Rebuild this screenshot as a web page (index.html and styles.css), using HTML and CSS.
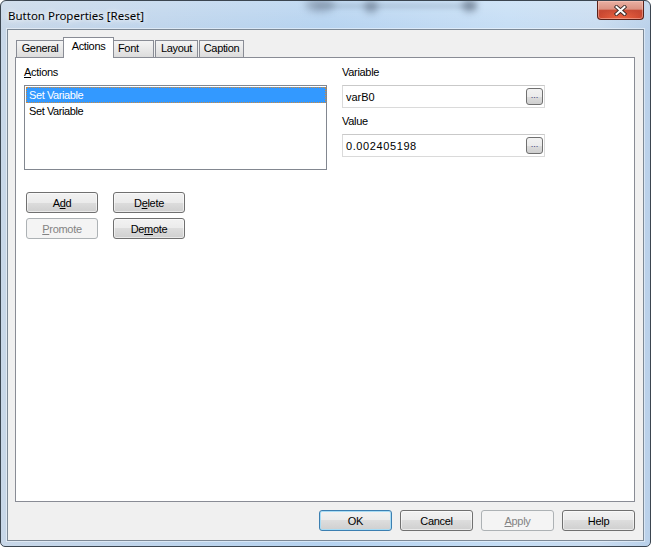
FILE: index.html
```html
<!DOCTYPE html>
<html>
<head>
<meta charset="utf-8">
<title>Button Properties [Reset]</title>
<link rel="stylesheet" href="styles.css">
</head>
<body>
<div class="window">
  <div class="titlebar">
    <div class="glass-deco">
      <span class="blob blob0"></span>
      <span class="band"></span>
      <span class="blob blob1"></span>
      <span class="blob blob2"></span>
    </div>
    <span class="title">Button Properties [Reset]</span>
    <div class="close">
      <svg width="13" height="11" viewBox="0 0 13 11">
        <path d="M2.5 2 L10.5 9 M10.5 2 L2.5 9" stroke="#3a2a28" stroke-width="3.8" stroke-linecap="square" fill="none"/>
        <path d="M2.5 2 L10.5 9 M10.5 2 L2.5 9" stroke="#ffffff" stroke-width="2" stroke-linecap="square" fill="none"/>
      </svg>
    </div>
  </div>
  <div class="client">
    <div class="tabs">
      <div class="tab tab-general">General</div>
      <div class="tab tab-active">Actions</div>
      <div class="tab tab-font">Font</div>
      <div class="tab tab-layout">Layout</div>
      <div class="tab tab-caption">Caption</div>
    </div>
    <div class="panel">
      <div class="cols">
        <div class="left">
          <div class="label"><u>A</u>ctions</div>
          <div class="listbox">
            <div class="item sel">Set Variable</div>
            <div class="item">Set Variable</div>
          </div>
        </div>
        <div class="right">
          <div class="label">Variable</div>
          <div class="field"><span class="val">varB0</span><span class="dots">...</span></div>
          <div class="label label-gap">Value</div>
          <div class="field"><span class="val num">0.002405198</span><span class="dots">...</span></div>
        </div>
      </div>
      <div class="btngrid">
        <div class="btn">A<u>d</u>d</div>
        <div class="btn">D<u>e</u>lete</div>
        <div class="btn disabled"><u>P</u>romote</div>
        <div class="btn">De<u>m</u>ote</div>
      </div>
    </div>
    <div class="footer">
      <div class="btn default">OK</div>
      <div class="btn">Cancel</div>
      <div class="btn disabled"><u>A</u>pply</div>
      <div class="btn">Help</div>
    </div>
  </div>
</div>
</body>
</html>
```

FILE: styles.css
```css
* { box-sizing: border-box; }
html, body { margin: 0; padding: 0; background: #ffffff; }
body {
  width: 651px;
  height: 547px;
  overflow: hidden;
  font-family: "Liberation Sans", Arial, sans-serif;
  font-size: 11px;
  color: #000;
}

.window {
  width: 651px;
  height: 547px;
  border: 1px solid #3b4550;
  border-radius: 6px 6px 5px 5px;
  background:
    linear-gradient(180deg, rgba(255,255,255,0.18) 0, rgba(255,255,255,0) 28px),
    linear-gradient(90deg, #c8d7e8 0%, #bfd5ec 25%, #b6d3f0 50%, #c6def5 78%, #c9dcf0 92%, #bad1ea 100%);
  display: flex;
  flex-direction: column;
  overflow: hidden;
}

.titlebar {
  height: 28px;
  display: flex;
  align-items: center;
  padding: 0 6px 0 7px;
  position: relative;
}
.glass-deco {
  position: absolute;
  left: 300px;
  top: -3px;
  width: 185px;
  height: 18px;
  pointer-events: none;
}
.glass-deco span { position: absolute; display: block; }
.band {
  left: 14px;
  right: 10px;
  top: 6px;
  height: 4px;
  background: rgba(70, 85, 110, 0.22);
  filter: blur(2.5px);
}
.blob { border-radius: 50%; filter: blur(3.5px); }
.blob0 { left: 4px; top: 0; width: 30px; height: 14px; background: rgba(60, 70, 90, 0.3); }
.blob1 { left: 63px; top: 2px; width: 14px; height: 13px; background: rgba(40, 50, 70, 0.35); }
.blob2 { left: 161px; top: 1px; width: 15px; height: 13px; background: rgba(40, 50, 70, 0.4); }

.title {
  font-family: "Noto Sans", "Open Sans", sans-serif;
  font-size: 11.5px;
  color: #000;
  position: relative;
  text-shadow: 0 0 5px #fff, 0 0 9px rgba(255,255,255,0.8);
}
.close {
  margin-left: auto;
  align-self: flex-start;
  margin-top: -1px;
  width: 47px;
  height: 20px;
  border: 1px solid #5a2119;
  border-top-color: #7a3a32;
  border-radius: 0 0 4px 4px;
  background:
    radial-gradient(ellipse 60% 55% at 50% 100%, rgba(255,120,80,0.75) 0%, rgba(255,120,80,0) 100%),
    linear-gradient(#eab0a3 0%, #dc9282 45%, #c84a34 52%, #c23d28 100%);
  box-shadow: inset 0 0 0 1px rgba(255,210,200,0.45);
  display: flex;
  align-items: center;
  justify-content: center;
  position: relative;
}

.client {
  margin: 0 6px;
  height: 512px;
  border: 1px solid #7d8996;
  background: #f0f0f0;
  padding: 7px 8px 0 7px;
  display: flex;
  flex-direction: column;
  box-shadow: 0 0 0 1px rgba(255,255,255,0.45);
}

.tabs {
  display: flex;
  align-items: flex-end;
  height: 20px;
  padding-left: 1px;
}
.tab {
  height: 17px;
  border: 1px solid #898c95;
  border-bottom: none;
  background: linear-gradient(#f4f4f4 0%, #e9e9e9 50%, #dcdcdc 100%);
  text-align: center;
  line-height: 15px;
  letter-spacing: -0.35px;
  white-space: nowrap;
}
.tab-general { width: 47px; border-right: none; }
.tab-active {
  width: 51px;
  height: 21px;
  margin-bottom: -1px;
  background: #ffffff;
  position: relative;
  z-index: 1;
  line-height: 17px;
}
.tab-font { width: 40px; border-left: none; text-align: left; padding-left: 4px; }
.tab-layout { width: 43px; margin-left: 1px; }
.tab-caption { width: 45px; margin-left: 1px; }

.panel {
  height: 445px;
  border: 1px solid #898c95;
  background: #ffffff;
  padding: 8px 0 0 8px;
}
.cols { display: flex; gap: 15px; }
.left { width: 303px; }
.right { width: 203px; }
.label {
  height: 13px;
  line-height: 13px;
  letter-spacing: -0.3px;
  white-space: nowrap;
}
.label-gap { margin-top: 7px; }

.listbox {
  margin-top: 6px;
  height: 85px;
  border: 1px solid #828790;
  padding: 1px 0 0 1px;
  background: #fff;
}
.item {
  width: 300px;
  height: 16px;
  line-height: 16px;
  padding-left: 3px;
  letter-spacing: -0.4px;
  white-space: nowrap;
}
.item.sel {
  background: #3399ff;
  color: #ffffff;
  border: 1px dotted #cf8a3c;
  line-height: 14px;
  padding-left: 2px;
}

.field {
  margin-top: 6px;
  height: 23px;
  border: 1px solid #dadada;
  border-top-color: #c9c9c9;
  display: flex;
  align-items: center;
  justify-content: space-between;
  padding: 0 1px 0 3px;
  background: #fff;
}
.val { letter-spacing: 0; }
.val.num { letter-spacing: 0.6px; }
.dots {
  width: 17px;
  height: 17px;
  border: 1px solid #707070;
  border-radius: 3px;
  background: linear-gradient(#f2f2f2 0%, #ebebeb 50%, #dddddd 50%, #cfcfcf 100%);
  font-size: 9px;
  line-height: 13px;
  text-align: center;
  color: #3a3a7a;
  letter-spacing: 0;
}

.btngrid {
  display: grid;
  grid-template-columns: 72px 72px;
  column-gap: 15px;
  row-gap: 5px;
  margin: 22px 0 0 2px;
}
.btn {
  height: 21px;
  border: 1px solid #707070;
  border-radius: 3px;
  background: linear-gradient(#f2f2f2 0%, #ebebeb 50%, #dddddd 50%, #cfcfcf 100%);
  box-shadow: inset 0 0 0 1px rgba(255,255,255,0.55);
  display: flex;
  align-items: center;
  justify-content: center;
  letter-spacing: -0.3px;
  white-space: nowrap;
  color: #000;
}
.btn.disabled {
  border-color: #adb2b5;
  background: #f4f4f4;
  box-shadow: none;
  color: #838383;
}
.btn.default {
  border-color: #3c7fb1;
  box-shadow: inset 0 0 0 1px #a8dcf5;
}

.footer {
  display: flex;
  justify-content: flex-end;
  gap: 8px;
  margin-top: 8px;
}
.footer .btn { width: 73px; }
```
